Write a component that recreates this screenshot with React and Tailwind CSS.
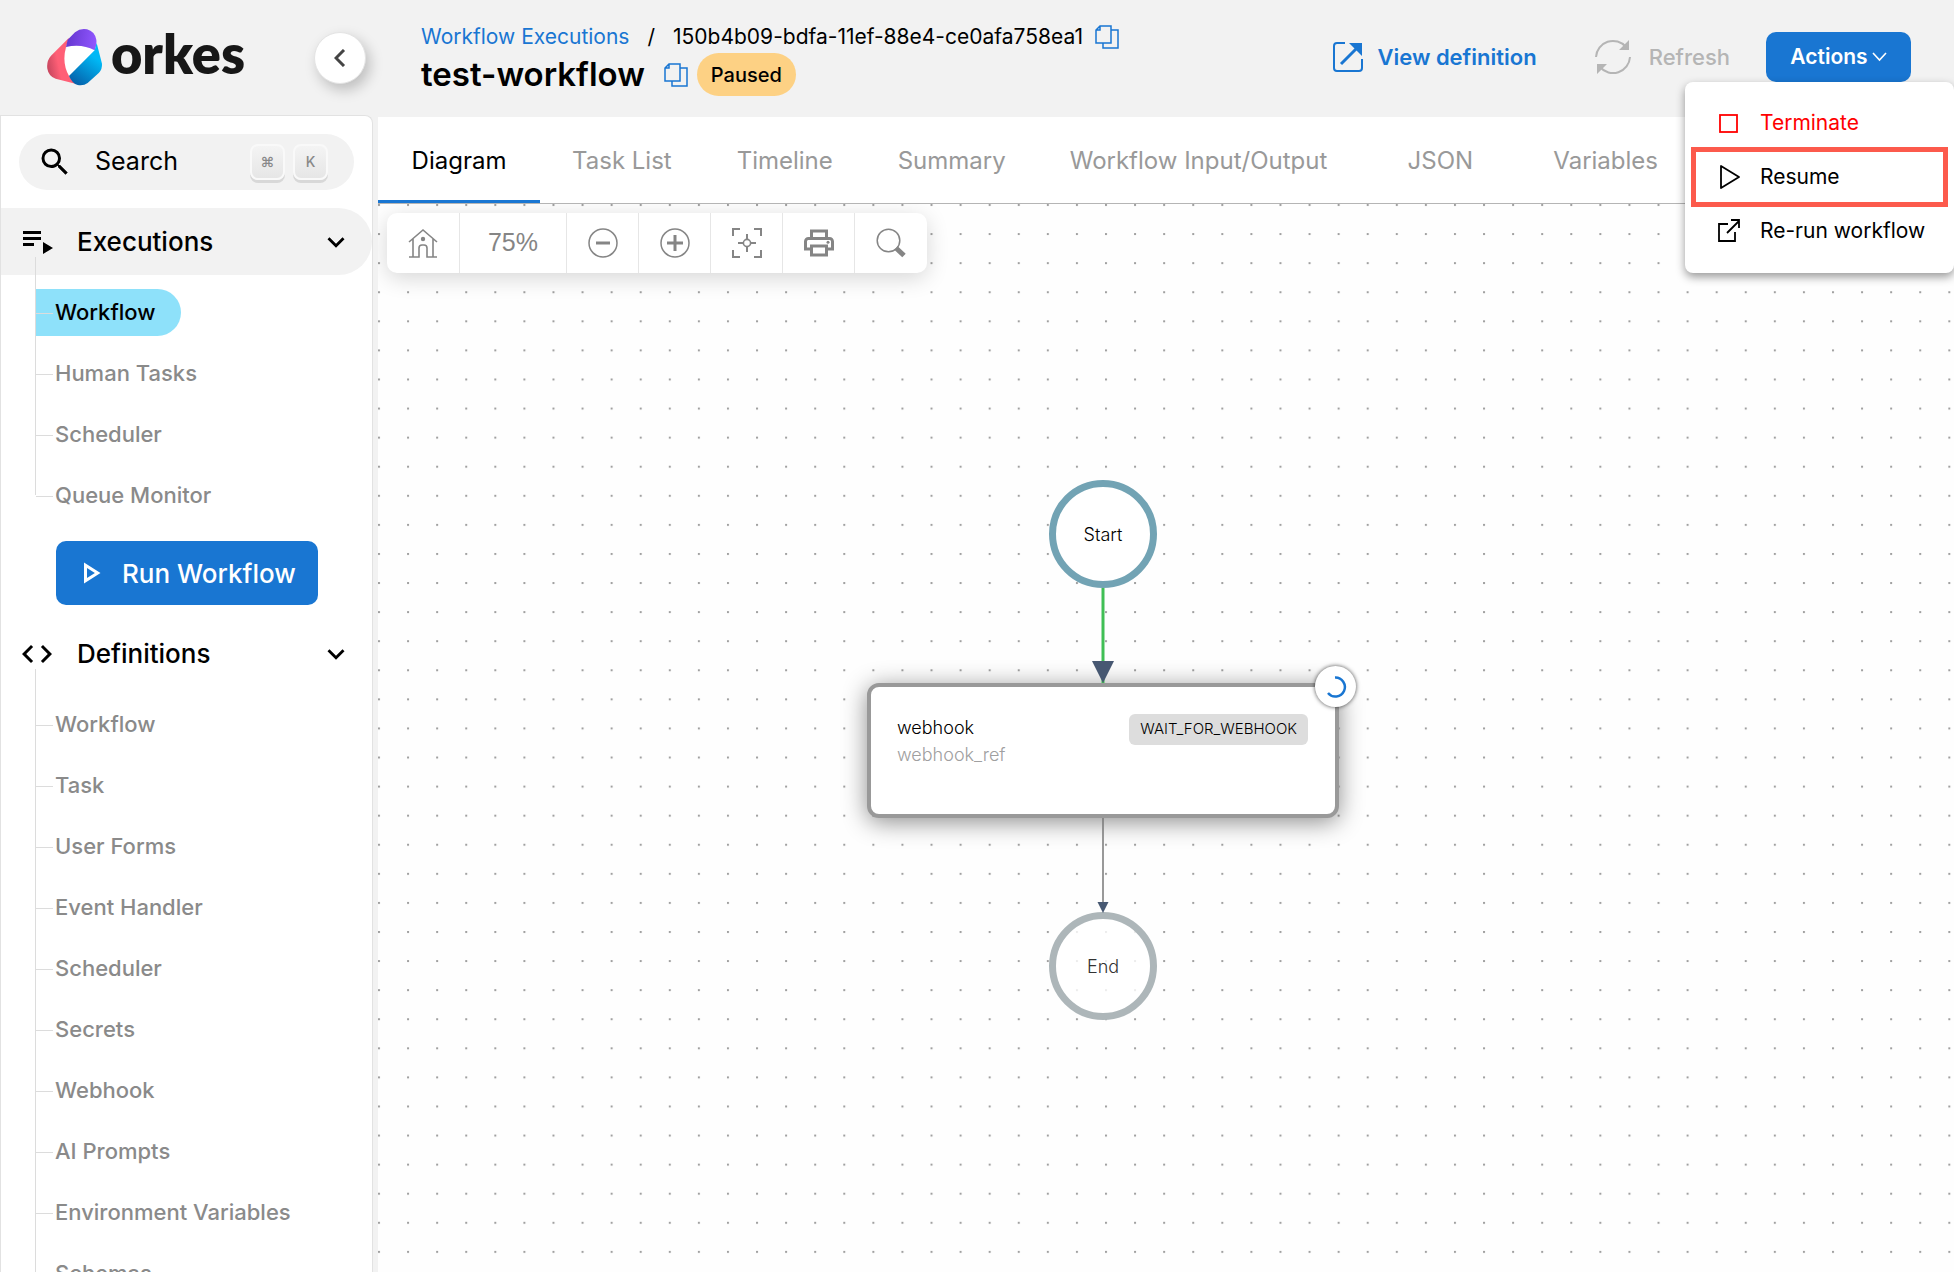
import { useState } from 'react';
import { MdCode, MdKeyboardArrowDown, MdOutlinePlayArrow, MdOutlinePrint, MdSearch } from 'react-icons/md';

const executions = ['Workflow', 'Human Tasks', 'Scheduler', 'Queue Monitor'];

const definitions = [
  'Workflow',
  'Task',
  'User Forms',
  'Event Handler',
  'Scheduler',
  'Secrets',
  'Webhook',
  'AI Prompts',
  'Environment Variables',
  'Schemas',
];

const tabs = ['Diagram', 'Task List', 'Timeline', 'Summary', 'Workflow Input/Output', 'JSON', 'Variables'];

const OrkesMark = () => (
  <svg width="56" height="57" viewBox="0 0 168 171" className="shrink-0" aria-hidden="true">
    <defs>
      <linearGradient id="mark-red" x1="0" y1="0.6" x2="0.6" y2="0.4">
        <stop offset="0" stopColor="#c9475f" />
        <stop offset="0.6" stopColor="#ff5f76" />
      </linearGradient>
      <linearGradient id="mark-purple" x1="0" y1="0.5" x2="1" y2="0.6">
        <stop offset="0" stopColor="#6436cf" />
        <stop offset="1" stopColor="#9157ff" />
      </linearGradient>
      <linearGradient id="mark-blue" x1="0.7" y1="0.3" x2="0.3" y2="1">
        <stop offset="0" stopColor="#00b8f5" />
        <stop offset="1" stopColor="#0564ad" />
      </linearGradient>
    </defs>
    <path d="M60 54Q100 42 143 64L66 141Q46 112 50 80Z" fill="#fff" />
    <path d="M66 26L12 80Q-2 96 1 119Q5 142 26 149L88 165Q74 155 66 141Q44 102 57 54Z" fill="url(#mark-red)" />
    <path d="M57 54L62 32L84 10Q100 -3 120 1Q143 7 148 32Q150 48 143 64Q104 43 57 54Z" fill="url(#mark-purple)" />
    <path d="M149 42L165 104Q166 120 156 131L122 162Q110 171 92 168Q76 164 66 141L143 64Z" fill="url(#mark-blue)" />
  </svg>
);

const PlaylistIcon = () => (
  <svg width="30" height="24" viewBox="0 0 30 24" fill="currentColor" className="shrink-0" aria-hidden="true">
    <path d="M0 1h18v3H0zM0 7h18v3H0zM0 13h11v3H0zM20 12l10 6-10 6z" />
  </svg>
);

const CopyIcon = () => (
  <svg width="24" height="24" viewBox="0 0 24 24" fill="none" stroke="currentColor" strokeWidth="1.5" aria-hidden="true">
    <path d="M5 1h11v17H1V5zM5 1v4H1" />
    <path d="M16 5h7v18H8v-5" />
  </svg>
);

const OpenIcon = () => (
  <svg width="30" height="30" viewBox="0 0 30 30" fill="none" stroke="currentColor" strokeWidth="2" aria-hidden="true">
    <path d="M12 1H4Q1 1 1 4V26Q1 29 4 29H26Q29 29 29 26V17" />
    <path d="M8 22L24 6" strokeWidth="3" />
    <path d="M16 1h13v13z" fill="currentColor" stroke="none" />
  </svg>
);

const RefreshIcon = () => (
  <svg width="36" height="36" viewBox="0 0 36 36" fill="none" stroke="currentColor" strokeWidth="2" aria-hidden="true">
    <path d="M1 18A17 17 0 0 1 31 8M35 18A17 17 0 0 1 5 28" />
    <path d="M34 1v10H24zM2 35V25h10z" fill="currentColor" stroke="none" />
  </svg>
);

const HomeIcon = () => (
  <svg width="30" height="30" viewBox="0 0 30 30" fill="none" stroke="currentColor" strokeWidth="1.6" aria-hidden="true">
    <path d="M1 14L15 2l14 12M5 11v18M25 11v18M1 29h10V20q0-3 3-3h2q3 0 3 3v9h10" />
    <circle cx="15" cy="11" r="2.2" fill="currentColor" stroke="none" />
  </svg>
);

const MinusIcon = () => (
  <svg width="30" height="30" viewBox="0 0 30 30" fill="none" stroke="currentColor" aria-hidden="true">
    <circle cx="15" cy="15" r="14" strokeWidth="1.5" />
    <path d="M8 15h14" strokeWidth="3" />
  </svg>
);

const PlusIcon = () => (
  <svg width="30" height="30" viewBox="0 0 30 30" fill="none" stroke="currentColor" aria-hidden="true">
    <circle cx="15" cy="15" r="14" strokeWidth="1.5" />
    <path d="M7 15h16M15 7v16" strokeWidth="3" />
  </svg>
);

const FitIcon = () => (
  <svg width="30" height="30" viewBox="0 0 30 30" fill="none" stroke="currentColor" strokeWidth="2" aria-hidden="true">
    <path d="M1 8V1h7M22 1h7v7M29 22v7h-7M8 29H1v-7" />
    <circle cx="15" cy="15" r="3.6" strokeWidth="1.6" />
    <path d="M15 6v5M15 19v5M6 15h5M19 15h5" />
  </svg>
);

const MagnifierIcon = () => (
  <svg width="30" height="30" viewBox="0 0 30 30" fill="none" stroke="currentColor" aria-hidden="true">
    <circle cx="12.5" cy="12.5" r="11.3" strokeWidth="1.5" />
    <path d="M20 20l8 7.500" strokeWidth="5" />
  </svg>
);

const StopIcon = () => (
  <svg width="22" height="24" viewBox="0 0 22 24" fill="none" stroke="currentColor" strokeWidth="1.8" aria-hidden="true">
    <rect x="2" y="4" width="17" height="17" />
  </svg>
);

const ResumeIcon = () => (
  <svg width="22" height="30" viewBox="0 0 22 30" fill="none" stroke="currentColor" strokeWidth="1.8" strokeLinejoin="round" aria-hidden="true">
    <path d="M3 4v22l18-11z" />
  </svg>
);

const RerunIcon = () => (
  <svg width="22" height="24" viewBox="0 0 22 24" fill="none" stroke="currentColor" strokeWidth="1.8" aria-hidden="true">
    <path d="M10 5H1v17h16V13M9 14L21 2M13 1h8v8" />
  </svg>
);

const SectionHeader = ({ icon, label, active }) => (
  <button
    type="button"
    className={`flex h-[67px] w-full items-center rounded-r-full pr-[19px] pl-[22px] text-left text-[26px] font-medium ${
      active ? 'bg-[#f2f2f2]' : ''
    }`}
  >
    <span className="flex w-[54px] items-center">{icon}</span>
    <span className="flex-1">{label}</span>
    <MdKeyboardArrowDown className="size-[34px] shrink-0" />
  </button>
);

const NavList = ({ items, selected, open }) => (
  <ul className="relative pt-[7px] pl-[35px]">
    <li
      aria-hidden="true"
      className={`absolute -top-[18px] left-[34px] w-px bg-[#dcdcdc] ${open ? 'bottom-0' : 'bottom-[31px]'}`}
    />
    {items.map((item) => (
      <li key={item} className="flex h-[61px] items-center">
        <a
          href="#"
          className={`relative flex h-[47px] items-center rounded-r-full pr-[26px] pl-[19px] text-[22px] font-medium before:absolute before:top-1/2 before:left-0 before:h-px before:w-[17px] before:bg-[#dcdcdc] ${
            item === selected ? 'bg-[#8ee1fa] text-black' : 'text-[#8a8a8a]'
          }`}
        >
          {item}
        </a>
      </li>
    ))}
  </ul>
);

const Key = ({ children }) => (
  <kbd className="flex h-9 w-[35px] items-center justify-center rounded-lg border-2 border-[#f9f9f9] bg-linear-to-b from-[#f4f4f4] to-[#e6e6e6] font-['Inter','DejaVu_Sans',sans-serif] text-sm font-medium text-[#888] shadow-[0_3px_0_#d8d8d8]">
    {children}
  </kbd>
);

const Sidebar = () => (
  <aside className="flex w-[373px] shrink-0 flex-col">
    <div className="flex h-[115px] shrink-0 items-center pr-[7px] pl-[47px]">
      <OrkesMark />
      <span className="ml-2 pb-2 font-['Lato',sans-serif] text-[54px] leading-none font-extrabold text-[#171717]">orkes</span>
      <button
        type="button"
        aria-label="Collapse menu"
        className="ml-auto flex size-[52px] items-center justify-center rounded-full border border-[#e4e4e4] bg-white text-[#444] shadow-[4px_6px_14px_rgba(0,0,0,0.22)]"
      >
        <svg width="12" height="18" viewBox="0 0 12 18" fill="none" stroke="currentColor" strokeWidth="3" aria-hidden="true">
          <path d="M10 1L2 9l8 8" />
        </svg>
      </button>
    </div>
    <nav className="flex-1 overflow-hidden rounded-tr-lg border border-b-0 border-[#e2e2e2] bg-white pt-[18px]">
      <button type="button" className="mx-[18px] flex h-14 w-[335px] items-center rounded-full bg-[#f2f2f2] pr-[26px] pl-[18px]">
        <MdSearch className="size-9" />
        <span className="ml-[22px] flex-1 text-left text-[25px]">Search</span>
        <span className="flex gap-2">
          <Key>⌘</Key>
          <Key>K</Key>
        </span>
      </button>
      <div className="mt-[18px]">
        <SectionHeader icon={<PlaylistIcon />} label="Executions" active />
        <NavList items={executions} selected="Workflow" />
        <button
          type="button"
          className="mt-[15px] ml-[55px] flex h-16 items-center gap-[14px] rounded-[10px] bg-[#1976d2] pr-[22px] pl-4 text-[26px] font-medium text-white"
        >
          <MdOutlinePlayArrow className="size-9" />
          Run Workflow
        </button>
      </div>
      <div className="mt-[15px]">
        <SectionHeader icon={<MdCode className="-ml-1 size-9" />} label="Definitions" />
        <NavList items={definitions} open />
      </div>
    </nav>
  </aside>
);

const ActionsMenu = () => (
  <div
    role="menu"
    className="absolute top-[82px] right-0 z-20 w-[269px] rounded-lg bg-white px-[6px] pt-[17px] pb-[18px] text-[21px] shadow-[0_4px_10px_rgba(0,0,0,0.4)]"
  >
    <button type="button" role="menuitem" className="flex h-12 w-full items-center gap-5 pl-[27px] text-[#f00]">
      <StopIcon />
      Terminate
    </button>
    <button
      type="button"
      role="menuitem"
      className="flex h-[60px] w-full items-center gap-5 border-[5px] border-[#fc5a4c] pl-[22px]"
    >
      <ResumeIcon />
      Resume
    </button>
    <button type="button" role="menuitem" className="flex h-12 w-full items-center gap-5 pl-[27px] whitespace-nowrap">
      <RerunIcon />
      Re-run workflow
    </button>
  </div>
);

const Header = () => (
  <header className="relative flex h-[117px] shrink-0 items-start justify-between px-[43px]">
    <div className="pt-[21px]">
      <div className="flex h-8 items-center text-[21px]">
        <a href="#" className="text-[#1976d2]">Workflow Executions</a>
        <span className="mx-[18px]">/</span>
        <span>150b4b09-bdfa-11ef-88e4-ce0afa758ea1</span>
        <button type="button" aria-label="Copy execution id" className="ml-3 text-[#1976d2]">
          <CopyIcon />
        </button>
      </div>
      <div className="flex h-[43px] items-center">
        <h1 className="text-[33px] font-semibold">test-workflow</h1>
        <button type="button" aria-label="Copy workflow name" className="ml-[19px] text-[#1976d2]">
          <CopyIcon />
        </button>
        <span className="ml-[9px] flex h-[43px] items-center rounded-full bg-[#fdd184] px-[14px] text-[20px] font-medium">Paused</span>
      </div>
    </div>
    <div className="flex items-center pt-8">
      <a href="#" className="flex items-center gap-[14px] text-[22px] font-semibold text-[#1976d2]">
        <OpenIcon />
        View definition
      </a>
      <button type="button" disabled className="ml-[58px] flex items-center gap-[18px] text-[22px] font-medium text-[#b5b5b5]">
        <RefreshIcon />
        Refresh
      </button>
      <button
        type="button"
        aria-haspopup="menu"
        className="ml-9 flex h-[50px] w-[145px] items-center justify-center gap-1 rounded-[10px] bg-[#1976d2] text-[21px] font-semibold text-white"
      >
        Actions
        <svg width="15" height="10" viewBox="0 0 15 10" fill="none" stroke="currentColor" strokeWidth="1.6" aria-hidden="true">
          <path d="M1 1l6.500 7L14 1" />
        </svg>
      </button>
    </div>
    <ActionsMenu />
  </header>
);

const Toolbar = () => {
  const tools = [
    { label: 'Zoom out', icon: <MinusIcon /> },
    { label: 'Zoom in', icon: <PlusIcon /> },
    { label: 'Fit to screen', icon: <FitIcon /> },
    { label: 'Print', icon: <MdOutlinePrint className="size-9" /> },
    { label: 'Search tasks', icon: <MagnifierIcon /> },
  ];

  return (
    <div className="absolute top-[9px] left-[9px] flex h-[60px] divide-x divide-[#e6e6e6] rounded-[10px] bg-white text-[#858585] shadow-[0_5px_22px_rgba(0,0,0,0.16)]">
      <button type="button" aria-label="Reset view" className="flex w-[73px] items-center justify-center">
        <HomeIcon />
      </button>
      <span className="flex w-[107px] items-center justify-center font-['Liberation_Sans',sans-serif] text-[25px]">75%</span>
      {tools.map(({ label, icon }) => (
        <button key={label} type="button" aria-label={label} className="flex w-[72px] items-center justify-center">
          {icon}
        </button>
      ))}
    </div>
  );
};

const Diagram = () => (
  <section className="relative flex-1 overflow-hidden bg-[#fefefe]">
    <svg className="absolute inset-0 size-full" aria-hidden="true">
      <defs>
        <pattern id="dots" width="29.08" height="29.08" patternUnits="userSpaceOnUse">
          <rect x="0" y="0" width="2" height="2" fill="#a0a0a0" />
        </pattern>
      </defs>
      <rect width="100%" height="100%" fill="url(#dots)" />
    </svg>

    <div className="absolute top-[276px] left-[671px] flex size-[108px] items-center justify-center rounded-full border-[7px] border-[#72a3b4] bg-white text-[18px] font-light">
      Start
    </div>
    <div className="absolute top-[708px] left-[671px] flex size-[108px] items-center justify-center rounded-full border-[7px] border-[#adb6b9] bg-white/80 text-[18px] font-light text-[#333]">
      End
    </div>

    <div className="absolute top-[479px] left-[489px] flex h-[135px] w-[472px] items-start justify-between rounded-xl border-4 border-[#999] bg-white pt-[27px] pr-[27px] pl-[26px] shadow-[0_4px_24px_rgba(0,0,0,0.45)]">
      <div className="text-[18px] leading-[27px] font-light">
        <div>webhook</div>
        <div className="text-[#a0a0a0]">webhook_ref</div>
      </div>
      <span className="flex h-[31px] items-center rounded-md bg-[#ddd] px-[11px] text-[15px] font-light">WAIT_FOR_WEBHOOK</span>
      <span className="absolute -top-[21px] -right-[21px] flex size-[41px] items-center justify-center rounded-full bg-white shadow-[0_0_4px_rgba(0,0,0,0.7)]">
        <svg width="22" height="22" viewBox="0 0 22 22" fill="none" stroke="#1976d2" strokeWidth="2.500" aria-hidden="true">
          <path d="M10 1.500A9.500 9.500 0 1 1 3 17" />
        </svg>
      </span>
    </div>

    <svg className="absolute top-[384px] left-[714px]" width="22" height="326" viewBox="0 0 22 326" aria-hidden="true">
      <path d="M11 0V95" stroke="#40bf55" strokeWidth="3" />
      <path d="M0 73h22L11 95z" fill="#475872" />
      <path d="M11 230V314" stroke="#777" strokeWidth="1.500" />
      <path d="M5.500 314h11L11 325z" fill="#475872" />
    </svg>

    <Toolbar />
  </section>
);

const App = () => {
  const [tab, setTab] = useState('Diagram');

  return (
    <div className="flex h-screen gap-[5px] overflow-hidden bg-[#f2f2f2] font-['Inter',sans-serif] text-black">
      <Sidebar />
      <main className="flex min-w-0 flex-1 flex-col">
        <Header />
        <div role="tablist" className="flex h-[87px] shrink-0 border-b border-[#b5b5b5] bg-white">
          {tabs.map((name) => (
            <button
              key={name}
              type="button"
              role="tab"
              aria-selected={name === tab}
              onClick={() => setTab(name)}
              className={`min-w-[162px] border-b-[3px] px-8 pt-1 text-2xl whitespace-nowrap ${
                name === tab ? 'border-[#1976d2] text-black' : 'border-transparent text-[#999]'
              }`}
            >
              {name}
            </button>
          ))}
        </div>
        <Diagram />
      </main>
    </div>
  );
};

export default App;
